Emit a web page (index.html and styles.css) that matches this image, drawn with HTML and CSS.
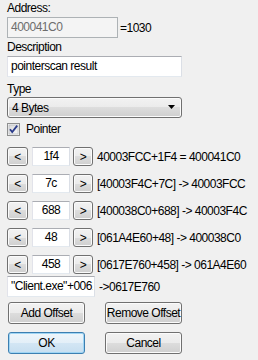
FILE: index.html
```html
<!DOCTYPE html>
<html>
<head>
<meta charset="utf-8">
<link rel="stylesheet" href="styles.css">
</head>
<body>
<div class="dlg">
  <div class="lbl lbl-address">Address:</div>
  <div class="addr-row">
    <div class="edit edit-addr">400041C0</div>
    <span class="eq">=1030</span>
  </div>
  <div class="lbl lbl-desc">Description</div>
  <div class="edit edit-desc">pointerscan result</div>
  <div class="lbl lbl-type">Type</div>
  <div class="combo">
    <span>4 Bytes</span>
    <svg class="arrow" width="7" height="4" viewBox="0 0 7 4"><path d="M0 0H7L3.5 4Z" fill="#000"/></svg>
  </div>
  <div class="check-row">
    <svg class="check" width="13" height="13" viewBox="0 0 13 13">
      <defs><linearGradient id="cg" x1="0" y1="0" x2="1" y2="1"><stop offset="0" stop-color="#d9d9d9"/><stop offset="1" stop-color="#f7f7f7"/></linearGradient></defs>
      <rect x="0.5" y="0.5" width="12" height="12" fill="#f4f4f4" stroke="#8e8f8f"/>
      <rect x="2" y="2" width="9" height="9" fill="url(#cg)" stroke="#aeb3b9" stroke-width="0.6"/>
      <path d="M3 6.3L5.2 9L10.2 2.6" fill="none" stroke="#2a3b8a" stroke-width="1.8"/>
    </svg>
    <span class="check-label">Pointer</span>
  </div>
  <div class="offsets">
    <div class="off-row"><div class="btn sm">&lt;</div><div class="edit edit-off">1f4</div><div class="btn sm sm2">&gt;</div><span class="off-text">40003FCC+1F4 = 400041C0</span></div>
    <div class="off-row"><div class="btn sm">&lt;</div><div class="edit edit-off">7c</div><div class="btn sm sm2">&gt;</div><span class="off-text">[40003F4C+7C] -&gt; 40003FCC</span></div>
    <div class="off-row"><div class="btn sm">&lt;</div><div class="edit edit-off">688</div><div class="btn sm sm2">&gt;</div><span class="off-text">[400038C0+688] -&gt; 40003F4C</span></div>
    <div class="off-row"><div class="btn sm">&lt;</div><div class="edit edit-off">48</div><div class="btn sm sm2">&gt;</div><span class="off-text">[061A4E60+48] -&gt; 400038C0</span></div>
    <div class="off-row"><div class="btn sm">&lt;</div><div class="edit edit-off">458</div><div class="btn sm sm2">&gt;</div><span class="off-text">[0617E760+458] -&gt; 061A4E60</span></div>
  </div>
  <div class="base-row">
    <div class="edit edit-base"><span class="clip">"Client.exe"+0061E760</span></div>
    <span class="base-text">-&gt;0617E760</span>
  </div>
  <div class="btn-row btn-row1">
    <div class="btn big">Add Offset</div>
    <div class="btn big">Remove Offset</div>
  </div>
  <div class="btn-row btn-row2">
    <div class="btn big default">OK</div>
    <div class="btn big">Cancel</div>
  </div>
</div>
</body>
</html>
```

FILE: styles.css
```css
html, body {
  margin: 0;
  padding: 0;
}
body {
  background: #f0f0f0;
  font-family: "Liberation Sans", Arial, sans-serif;
  font-size: 12px;
  letter-spacing: -0.5px;
  color: #000;
  width: 258px;
  height: 360px;
  overflow: hidden;
}
.dlg {
  display: flex;
  flex-direction: column;
  align-items: flex-start;
  padding-left: 7px;
}
.lbl {
  height: 15px;
  line-height: 15px;
}
.lbl-address { margin-top: 1px; }
.lbl-desc { margin-top: 2px; }
.lbl-type { margin-top: 5px; }

.edit {
  box-sizing: border-box;
  height: 21px;
  line-height: 19px;
  padding: 0 3px;
  background: #fff;
  border: 1px solid;
  border-color: #abadb3 #dbdfe6 #e3e9ef #e2e3ea;
  white-space: nowrap;
  overflow: hidden;
}
.addr-row {
  margin-top: 1px;
  display: flex;
  align-items: center;
}
.edit-addr {
  width: 111px;
  background: #f4f4f4;
  color: #6d6d6d;
  border-color: #adb2b5;
}
.eq { margin-left: 2px; }
.edit-desc {
  margin-top: 1px;
  width: 175px;
}

.combo {
  box-sizing: border-box;
  width: 175px;
  height: 21px;
  display: flex;
  align-items: center;
  justify-content: space-between;
  padding: 0 6px 0 4px;
  border: 1px solid #707070;
  border-radius: 3px;
  background: linear-gradient(#f2f2f2 0%, #ebebeb 50%, #dddddd 50%, #cfcfcf 100%);
  box-shadow: inset 0 0 0 1px #fbfbfb;
}
.arrow { display: block; margin-top: -2px; }

.check-row {
  margin-top: 5px;
  height: 13px;
  display: flex;
  align-items: center;
}
.check { display: block; }
.check-label { margin-left: 6px; line-height: 13px; }

.offsets {
  margin-top: 11px;
  display: flex;
  flex-direction: column;
  gap: 8px;
}
.off-row {
  display: flex;
  align-items: center;
  height: 19px;
}
.btn {
  box-sizing: border-box;
  display: flex;
  align-items: center;
  justify-content: center;
  border: 1px solid #707070;
  border-radius: 3px;
  background: linear-gradient(#f2f2f2 0%, #ebebeb 50%, #dddddd 50%, #cfcfcf 100%);
  box-shadow: inset 0 0 0 1px #fbfbfb;
  white-space: nowrap;
}
.btn.sm {
  width: 21px;
  height: 19px;
}
.btn.sm2 {
  width: 20px;
  margin-left: 3px;
}
.edit-off {
  width: 38px;
  height: 19px;
  line-height: 17px;
  margin-left: 4px;
  text-align: center;
}
.off-text { margin-left: 4px; white-space: nowrap; }

.base-row {
  margin-top: 2px;
  display: flex;
  align-items: center;
}
.edit-base { width: 88px; }
.clip {
  display: block;
  width: 82px;
  overflow: hidden;
}
.base-text { margin-left: 4px; }

.btn-row {
  display: flex;
  gap: 20px;
  padding-left: 1px;
}
.btn-row1 { margin-top: 5px; }
.btn-row2 { margin-top: 8px; }
.btn.big {
  width: 77px;
  height: 22px;
}
.btn.default {
  border-color: #3c7fb1;
  box-shadow: inset 0 0 0 1px #9fd5f4;
  background: linear-gradient(#eef6fb 0%, #e3eff8 50%, #d3e6f4 50%, #c6def0 100%);
}
```
